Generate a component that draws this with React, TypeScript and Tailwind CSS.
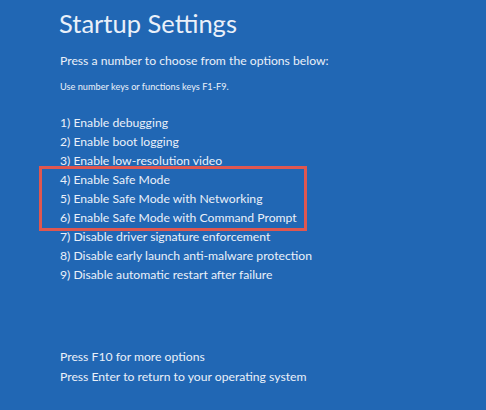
import React from "react";

const items = [
  "1) Enable debugging",
  "2) Enable boot logging",
  "3) Enable low-resolution video",
];
const boxed = [
  "4) Enable Safe Mode",
  "5) Enable Safe Mode with Networking",
  "6) Enable Safe Mode with Command Prompt",
];
const rest = [
  "7) Disable driver signature enforcement",
  "8) Disable early launch anti-malware protection",
  "9) Disable automatic restart after failure",
];

export default function App() {
  return (
    <div
      className="w-[486px] h-[410px] bg-[#2167b4] text-[#eaf0f9] pl-[60px] flex flex-col overflow-hidden whitespace-nowrap"
      style={{ fontFamily: 'Lato, "Open Sans", sans-serif' }}
    >
      <h1 className="text-[25.5px] leading-[32px] mt-[7px] -ml-[1px]">Startup Settings</h1>
      <p className="text-[12.2px] leading-[16px] mt-[14px]">Press a number to choose from the options below:</p>
      <p className="text-[9.2px] leading-[14px] mt-[11px]">Use number keys or functions keys F1-F9.</p>
      <div className="flex flex-col mt-[19px] text-[12.2px] leading-[19px]">
        {items.map((t) => (
          <div key={t}>{t}</div>
        ))}
        <div className="-ml-[21px] -my-[4px] w-[268px] pl-[18px] py-[1px] border-[3px] border-[#df5750] flex flex-col">
          {boxed.map((t) => (
            <div key={t}>{t}</div>
          ))}
        </div>
        {rest.map((t) => (
          <div key={t}>{t}</div>
        ))}
      </div>
      <div className="flex flex-col mt-[63px] text-[12.2px] leading-[20px]">
        <div>Press F10 for more options</div>
        <div>Press Enter to return to your operating system</div>
      </div>
    </div>
  );
}
